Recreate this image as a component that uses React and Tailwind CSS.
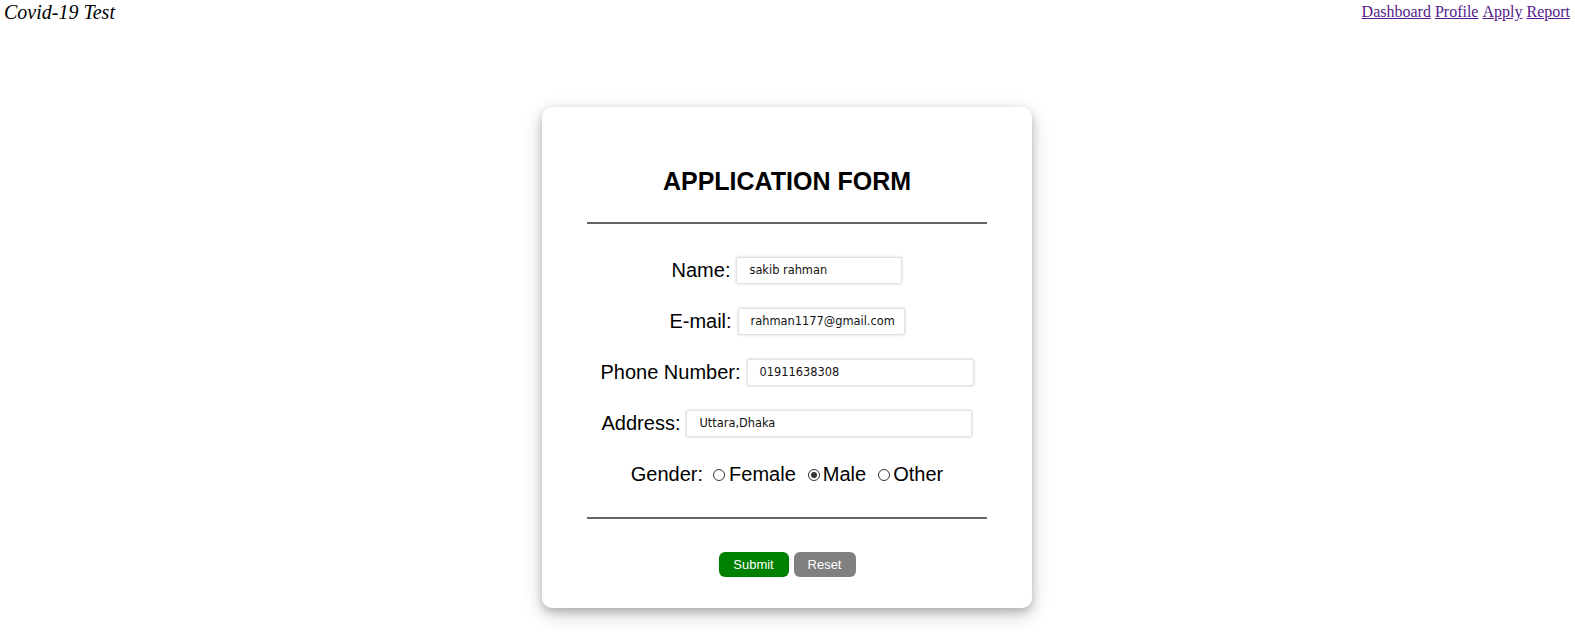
const rows = [
  { label: 'Name:', value: 'sakib rahman', width: 'w-[166px]' },
  { label: 'E-mail:', value: 'rahman1177@gmail.com', width: 'w-[167px]' },
  { label: 'Phone Number:', value: '01911638308', width: 'w-[227px]' },
  { label: 'Address:', value: 'Uttara,Dhaka', width: 'w-[286px]' },
]

const Radio = ({ checked }) => (
  <span className="w-[12px] h-[12px] rounded-full border border-[#333] flex items-center justify-center bg-white">
    {checked && <span className="w-[6px] h-[6px] rounded-full bg-[#333]" />}
  </span>
)

const Field = ({ label, value, width }) => (
  <div className="flex items-center justify-center gap-[6px] h-[27px]">
    <span className="text-[20px] leading-[23px] text-black">{label}</span>
    <div
      className={`${width} h-[27px] border border-[#e2e2e2] rounded-[2px] shadow-[0_0_3px_#d4d4d4] flex items-center pl-[12px] overflow-hidden whitespace-nowrap font-['DejaVu_Sans',sans-serif] text-[11.4px] text-[#111]`}
    >
      {value}
    </div>
  </div>
)

export default function App() {
  return (
    <div className="min-h-[640px] bg-white font-['Liberation_Sans',Arial,sans-serif]">
      <div className="flex justify-between items-start px-[4px] pt-[1px] font-['Liberation_Serif',serif]">
        <span className="italic text-[20px] leading-[23px]">Covid-19 Test</span>
        <nav className="text-[16px] leading-[19px] pt-[1px] pr-[1px] flex gap-[4px]">
          <a href="#" className="text-[#551a8b] underline">Dashboard</a>
          <a href="#" className="text-[#551a8b] underline">Profile</a>
          <a href="#" className="text-[#551a8b] underline">Apply</a>
          <a href="#" className="text-[#551a8b] underline">Report</a>
        </nav>
      </div>

      <div className="flex justify-center mt-[83px]">
        <div className="w-[490px] bg-white rounded-[10px] shadow-[0_4px_8px_0_rgba(0,0,0,0.2),0_6px_20px_0_rgba(0,0,0,0.19)] px-[45px] pt-[60px] pb-[31px] ml-[-1px]">
          <h1 className="text-center font-bold text-[25px] leading-[28px] text-black">
            APPLICATION FORM
          </h1>
          <div className="mt-[27px] h-[2px] bg-[#666]" />

          <div className="mt-[33px] flex flex-col gap-[24px]">
            {rows.map((r) => (
              <Field key={r.label} {...r} />
            ))}
            <div className="flex items-center justify-center h-[27px] text-[20px] leading-[23px] text-black">
              <span>Gender:</span>
              <span className="flex items-center ml-[10px] gap-[4px]">
                <Radio />
                <span>Female</span>
              </span>
              <span className="flex items-center ml-[12px] gap-[3px]">
                <Radio checked />
                <span>Male</span>
              </span>
              <span className="flex items-center ml-[12px] gap-[3px]">
                <Radio />
                <span>Other</span>
              </span>
            </div>
          </div>

          <div className="mt-[29px] h-[2px] bg-[#666]" />

          <div className="mt-[33px] flex justify-center gap-[5px]">
            <button className="w-[70px] h-[25px] rounded-[6px] bg-[#008000] text-white text-[13px]">
              Submit
            </button>
            <button className="w-[62px] h-[25px] rounded-[6px] bg-[#808080] text-white text-[13px]">
              Reset
            </button>
          </div>
        </div>
      </div>
    </div>
  )
}
